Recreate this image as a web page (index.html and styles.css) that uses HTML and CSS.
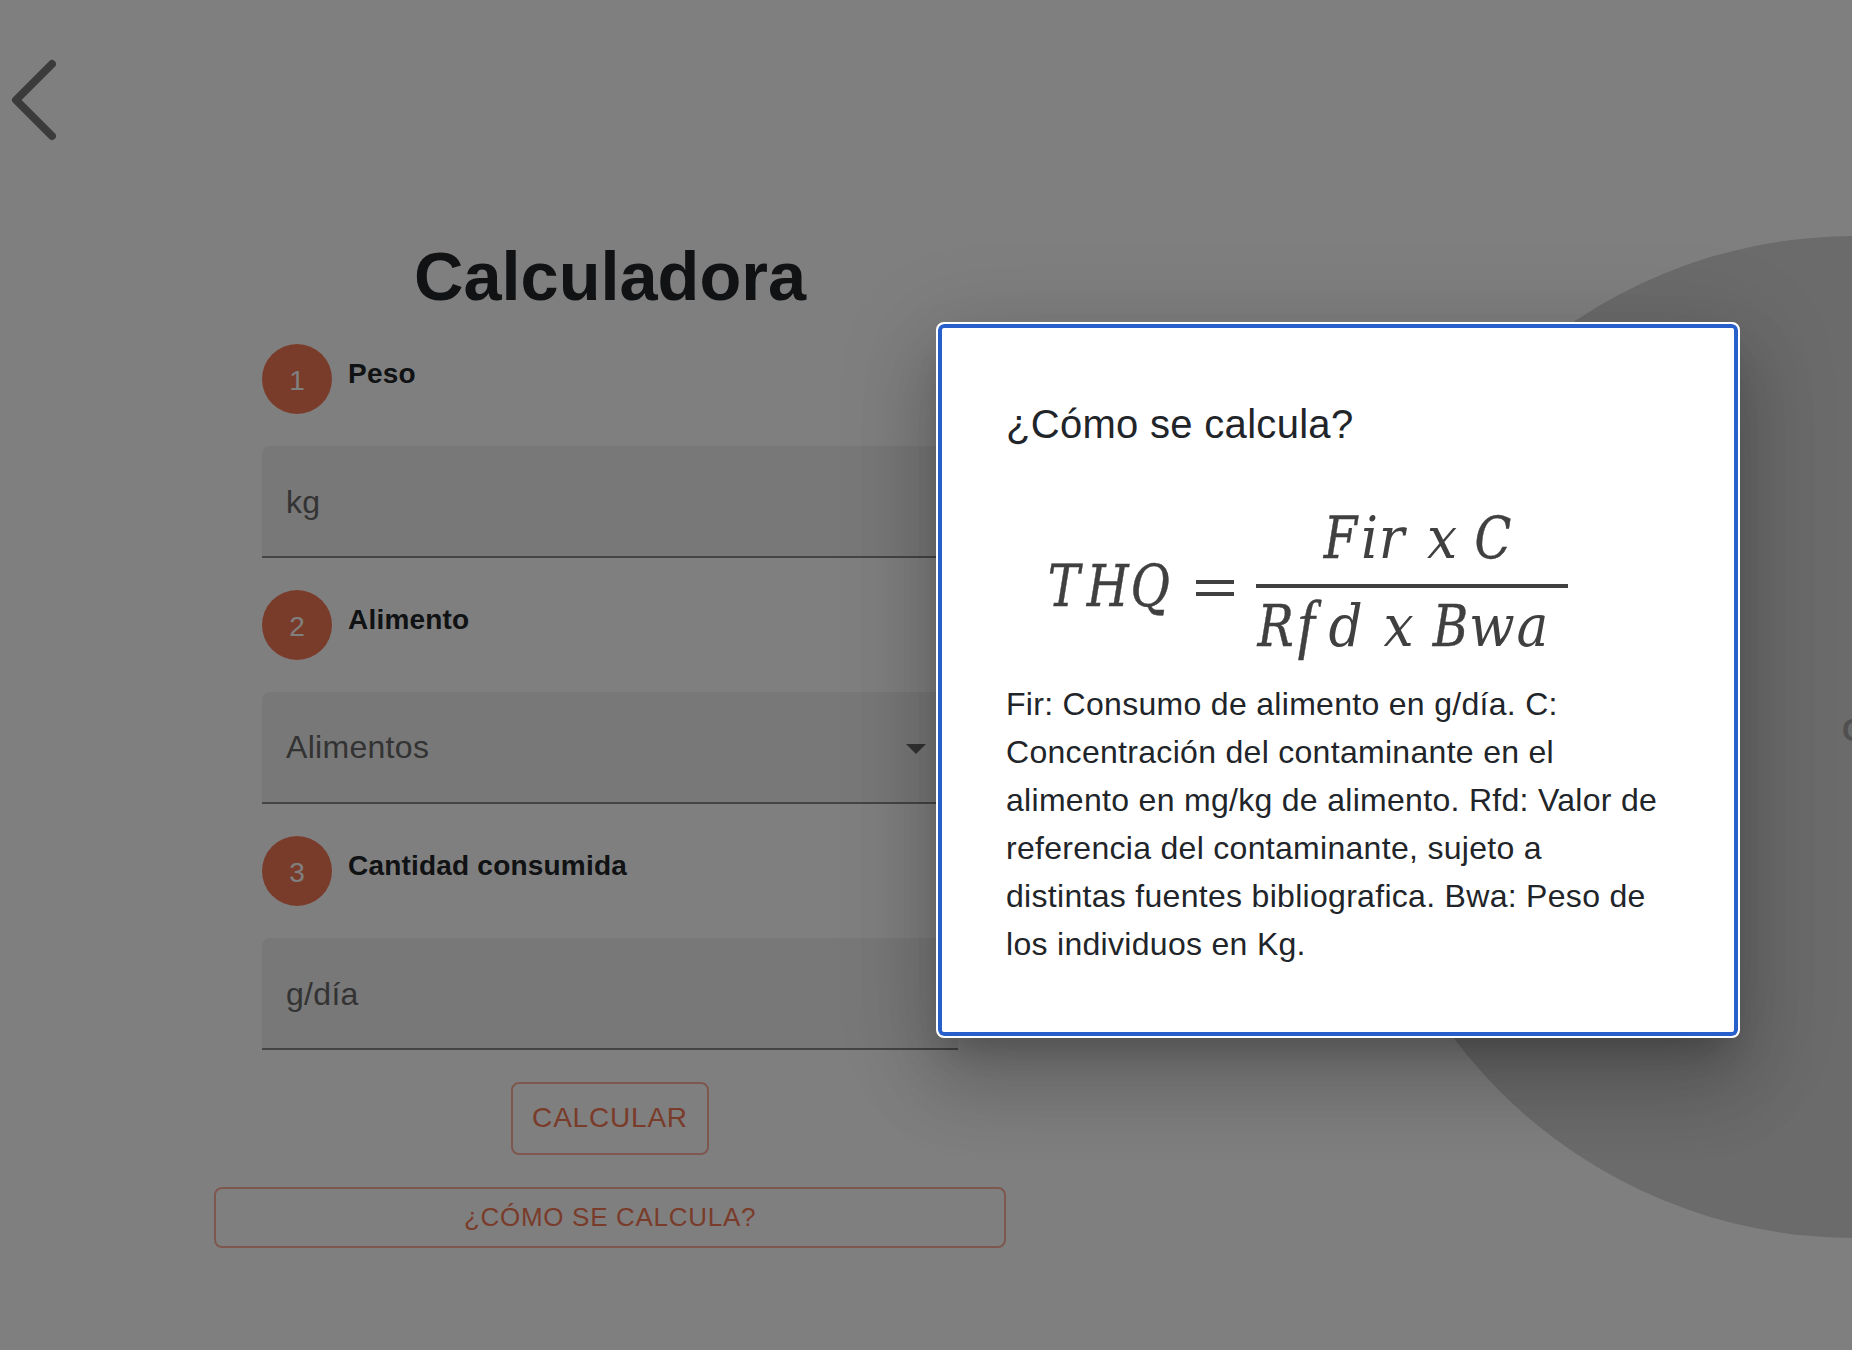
FILE: index.html
```html
<!DOCTYPE html>
<html lang="es">
<head>
<meta charset="utf-8">
<title>Calculadora</title>
<link rel="stylesheet" href="styles.css">
</head>
<body>
<div class="page">
  <header class="topbar">
    <svg class="back" width="48" height="88" viewBox="0 0 48 88" role="img" aria-label="Volver"><path d="M42 8 L6 44 L42 80"/></svg>
  </header>
  <main class="content">
    <form class="form">
      <h1 class="title">Calculadora</h1>
      <div class="step"><span class="num">1</span><span class="label">Peso</span></div>
      <div class="field"><span>kg</span></div>
      <div class="step"><span class="num">2</span><span class="label">Alimento</span></div>
      <div class="field field-select"><span>Alimentos</span><svg class="caret" width="20" height="10" viewBox="0 0 20 10"><path d="M0 0H20L10 10Z"/></svg></div>
      <div class="step"><span class="num">3</span><span class="label">Cantidad consumida</span></div>
      <div class="field"><span>g/día</span></div>
      <button class="btn" type="button">CALCULAR</button>
      <button class="btn btn-wide" type="button">¿CÓMO SE CALCULA?</button>
    </form>
    <aside class="result"><span class="result-text">C</span></aside>
  </main>
</div>
<div class="scrim">
  <section class="dialog" role="dialog">
    <h2 class="dialog-title">¿Cómo se calcula?</h2>
    <svg class="formula" width="560" height="170" viewBox="0 500 560 170">
      <g class="math" transform="scale(.93 1)">
        <text y="606" x="19 61 108">THQ</text>
        <text y="558" x="316 356 375">F<tspan class="low">ir</tspan></text>
        <text y="558" x="427"><tspan class="low">x</tspan></text>
        <text y="558" x="478">C</text>
        <text y="646" x="244.500 288 321">R<tspan class="math-f">f</tspan><tspan class="low">d</tspan></text>
        <text y="646" x="380"><tspan class="low">x</tspan></text>
        <text y="646" x="433 472 523">B<tspan class="low">wa</tspan></text>
      </g>
      <path class="rules" d="M166 580h38v4h-38zM166 592h38v4h-38zM226 584h312v4h-312z"/>
    </svg>
    <p class="dialog-text">Fir: Consumo de alimento en g/día. C: Concentración del contaminante en el alimento en mg/kg de alimento. Rfd: Valor de referencia del contaminante, sujeto a distintas fuentes bibliografica. Bwa: Peso de los individuos en Kg.</p>
  </section>
</div>
</body>
</html>
```
FILE: styles.css
```css
* { box-sizing: border-box; }
body {
  margin: 0;
  background: #fff;
  color: #212529;
  font-family: "Liberation Sans", Arial, sans-serif;
  overflow: hidden;
}
.page { width: 1852px; height: 1350px; overflow: hidden; }
.topbar { height: 236px; padding: 56px 0 0 10px; }
.back { display: block; }
.back path { fill: none; stroke: #777; stroke-width: 8; stroke-linecap: round; stroke-linejoin: round; }
.content { display: flex; align-items: flex-start; padding-left: 214px; gap: 347px; }
.form { flex: none; width: 792px; padding: 0 48px; }
.title { margin: 0; height: 108px; line-height: 82px; font-size: 68.5px; text-align: center; }
.step { display: flex; gap: 16px; height: 102px; }
.num {
  width: 70px; height: 70px; border-radius: 50%;
  background: #f47855; color: #fff;
  font-size: 28px; line-height: 74px; text-align: center;
}
.label { font-size: 28px; font-weight: 700; line-height: 59px; letter-spacing: .2px; }
.field {
  display: flex; align-items: center; justify-content: space-between;
  height: 112px; margin-bottom: 32px; padding: 2px 32px 0 24px;
  border-bottom: 2px solid #8b8b8b; border-radius: 8px 8px 0 0;
  background: #f0f0f0; color: #666;
  font-size: 32px; letter-spacing: .3px;
}
.field-select { padding-top: 0; }
.caret { margin-top: 3px; fill: #666; }
.btn {
  display: block; margin: 0 auto; padding: 0 0 1px;
  width: 198px; height: 73px;
  border: 2px solid #fcb09c; border-radius: 8px;
  background: transparent; color: #f47855;
  font: 28px "Liberation Sans", Arial, sans-serif; letter-spacing: .8px;
}
.btn-wide { width: 792px; height: 61px; margin: 32px -48px 0; font-size: 26px; letter-spacing: .7px; }
.result {
  flex: none; width: 1002px; height: 1002px; border-radius: 50%;
  background: #d6d6d6; color: #a0a0a0;
}
.result-text { display: block; padding: 478px 0 0 489px; font-size: 31px; line-height: 34px; font-weight: 700; }
.scrim { position: absolute; inset: 0; padding: 322px 0 0 936px; background: rgba(0, 0, 0, .5); overflow: hidden; }
.dialog {
  width: 804px; height: 716px; padding: 68px 72px 0 68px;
  border: 2px solid #fff; border-radius: 8px;
  background: #fff;
  box-shadow: inset 0 0 0 4px #2860cb, 0 22px 30px -14px rgba(0, 0, 0, .2), 0 48px 76px 6px rgba(0, 0, 0, .14), 0 18px 92px 16px rgba(0, 0, 0, .12);
}
.dialog-title { margin: 0 0 44px; font-size: 40px; line-height: 64px; font-weight: 400; letter-spacing: .3px; }
.formula { display: block; margin-left: 24px; }
.math text { font: italic 57.5px "DejaVu Serif Condensed", "DejaVu Serif", serif; font-stretch: condensed; fill: #404040; stroke: #404040; stroke-width: .4; }
.math .low { font-family: "DejaVu Serif", serif; font-stretch: normal; stroke: none; }
.math .math-f { font: italic 65px "Liberation Serif", "Times New Roman", serif; stroke-width: .4; }
.rules { fill: #404040; }
.dialog-text { margin: 10px 0 0; font-size: 32px; line-height: 48px; letter-spacing: .3px; }
```
